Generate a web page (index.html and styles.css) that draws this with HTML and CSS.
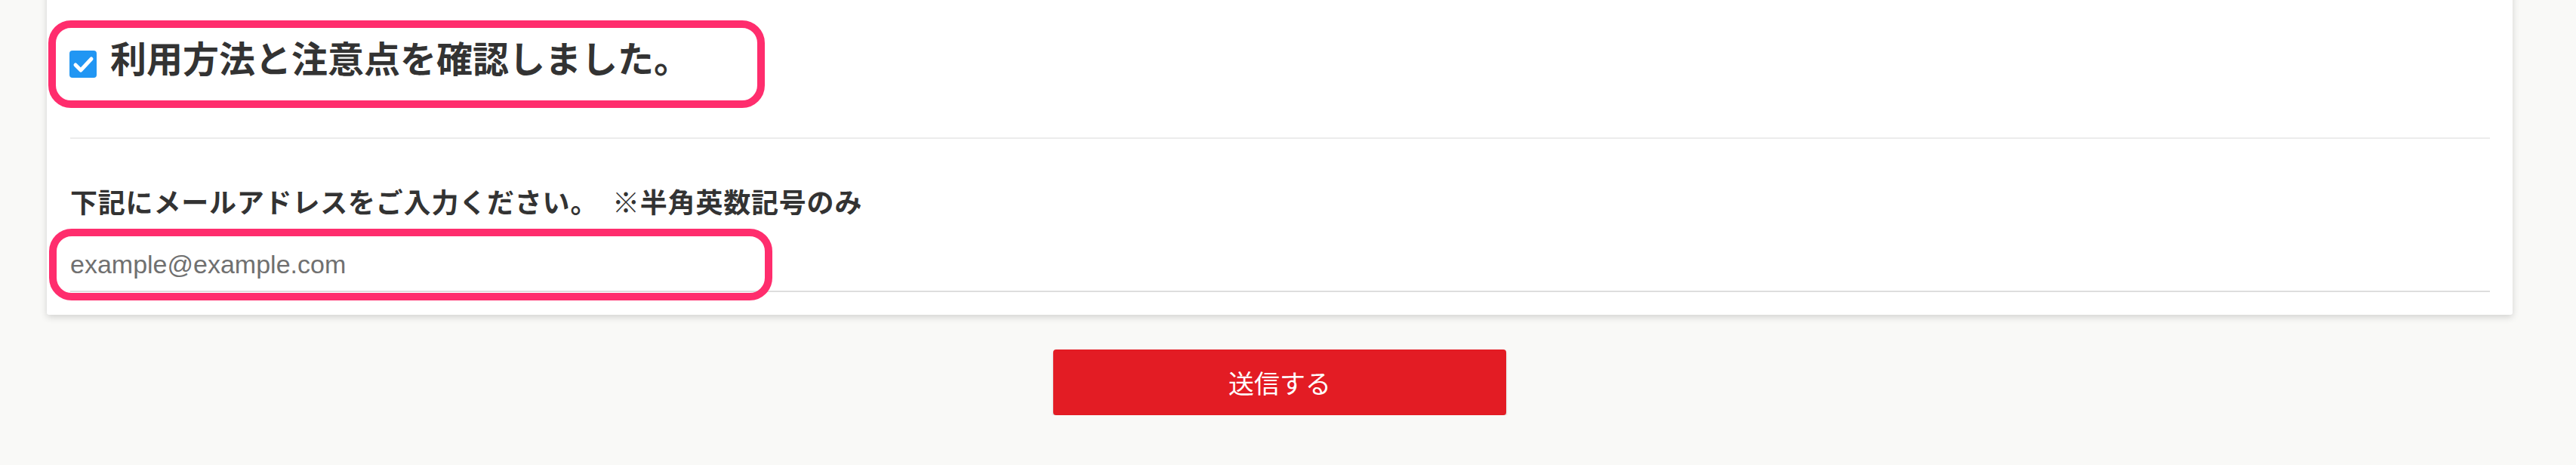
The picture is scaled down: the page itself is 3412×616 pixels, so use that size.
FILE: index.html
```html
<!DOCTYPE html>
<html lang="ja">

<head>
    <meta charset="UTF-8">
    <meta name="viewport" content="width=device-width, initial-scale=1.0">
    <title>メール登録</title>
    <link rel="stylesheet" href="styles.css">
</head>

<body>
    <div class="page">
        <!-- Entry Form -->
        <form class="card" id="entryForm">
            <label class="agree">
                <input type="checkbox" class="agree-input" checked>
                <span class="check">
                    <svg width="36" height="36" viewBox="0 0 36 36">
                        <polyline points="8,19 15,26 29,11" fill="none" stroke="#ffffff" stroke-width="5" stroke-linecap="round" stroke-linejoin="round" />
                    </svg>
                </span>
                <span class="agree-text">利用方法と注意点を確認しました。</span>
            </label>

            <div class="mail">
                <p class="mail-label">下記にメールアドレスをご入力ください。&ensp;※半角英数記号のみ</p>
                <div class="field">
                    <input type="email" class="mail-input" placeholder="example@example.com">
                    <span class="highlight"></span>
                </div>
            </div>
        </form>

        <!-- Submit -->
        <div class="actions">
            <button type="submit" form="entryForm" class="submit">送信する</button>
        </div>
    </div>
</body>

</html>
```

FILE: styles.css
```css
body {
    margin: 0;
    background-color: #f9f9f7;
    font-family: "Noto Sans CJK JP", "Noto Sans", sans-serif;
    color: #333333;
    overflow: hidden;
}

.page {
    padding: 0 84px 0 62px;
}

.card {
    margin-top: -20px;
    padding: 47px 30px 30px 31px;
    background-color: #ffffff;
    border-radius: 3px;
    box-shadow: 0 3px 10px rgba(0, 0, 0, 0.16);
}

/* Agree checkbox row (highlighted) */
.agree {
    display: flex;
    align-items: center;
    gap: 18px;
    box-sizing: border-box;
    width: 949px;
    height: 116px;
    margin-left: -29px;
    padding-left: 18px;
    border: 10px solid #ff2d6d;
    border-radius: 30px;
    cursor: pointer;
}

.agree-input {
    display: none;
}

.check {
    display: block;
    width: 36px;
    height: 36px;
    border-radius: 4px;
    background-color: #2196f3;
}

.check svg {
    display: block;
}

.agree-text {
    padding-bottom: 18px;
    font-size: 48px;
    font-weight: bold;
    line-height: 1.2;
}

/* Mail address */
.mail {
    margin-top: 39px;
    padding-top: 55px;
    border-top: 2px solid #ececec;
}

.mail-label {
    margin: 0;
    font-size: 36px;
    font-weight: bold;
    line-height: 54px;
    letter-spacing: 0.8px;
}

.field {
    position: relative;
    margin-top: 22px;
}

.mail-input {
    display: block;
    box-sizing: border-box;
    width: 100%;
    height: 72px;
    padding: 0;
    border: none;
    border-bottom: 2px solid #dddddd;
    background: transparent;
    font-family: "Liberation Sans", Arial, sans-serif;
    font-size: 34px;
    color: #333333;
    outline: none;
}

.mail-input::placeholder {
    color: #707070;
}

.highlight {
    position: absolute;
    left: -28px;
    top: -12px;
    box-sizing: border-box;
    width: 958px;
    height: 95px;
    border: 10px solid #ff2d6d;
    border-radius: 30px;
    pointer-events: none;
}

/* Submit button */
.actions {
    display: flex;
    justify-content: center;
    margin-top: 46px;
}

.submit {
    width: 600px;
    height: 87px;
    border: none;
    border-radius: 4px;
    background-color: #e31c24;
    color: #ffffff;
    font-family: "Noto Sans CJK JP", sans-serif;
    font-size: 34px;
    font-weight: normal;
    box-shadow: 0 2px 3px rgba(0, 0, 0, 0.2);
    cursor: pointer;
}
```
